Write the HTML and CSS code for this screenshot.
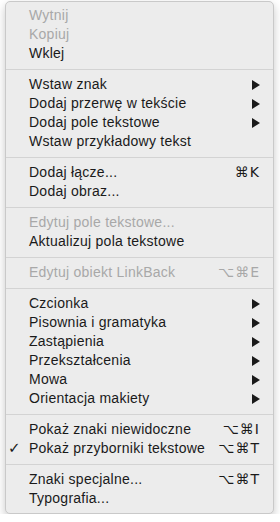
FILE: index.html
```html
<!DOCTYPE html>
<html lang="pl">
<head>
  <meta charset="UTF-8" />
  <meta name="viewport" content="width=device-width, initial-scale=1.0"/>
  <title>Menu kontekstowe</title>
  <link rel="stylesheet" href="styles.css">
</head>
<body>
  <!-- Context menu -->
  <ul class="menu">
    <li class="item disabled"><span class="check"></span><span class="label">Wytnij</span></li>
    <li class="item disabled"><span class="check"></span><span class="label">Kopiuj</span></li>
    <li class="item"><span class="check"></span><span class="label">Wklej</span></li>
    <li class="sep"></li>
    <li class="item"><span class="check"></span><span class="label">Wstaw znak</span><span class="arrow"></span></li>
    <li class="item"><span class="check"></span><span class="label">Dodaj przerwę w tekście</span><span class="arrow"></span></li>
    <li class="item"><span class="check"></span><span class="label">Dodaj pole tekstowe</span><span class="arrow"></span></li>
    <li class="item"><span class="check"></span><span class="label">Wstaw przykładowy tekst</span></li>
    <li class="sep"></li>
    <li class="item"><span class="check"></span><span class="label">Dodaj łącze...</span><span class="key">⌘K</span></li>
    <li class="item"><span class="check"></span><span class="label">Dodaj obraz...</span></li>
    <li class="sep"></li>
    <li class="item disabled"><span class="check"></span><span class="label">Edytuj pole tekstowe...</span></li>
    <li class="item"><span class="check"></span><span class="label">Aktualizuj pola tekstowe</span></li>
    <li class="sep"></li>
    <li class="item disabled"><span class="check"></span><span class="label">Edytuj obiekt LinkBack</span><span class="key">⌥⌘E</span></li>
    <li class="sep"></li>
    <li class="item"><span class="check"></span><span class="label">Czcionka</span><span class="arrow"></span></li>
    <li class="item"><span class="check"></span><span class="label">Pisownia i gramatyka</span><span class="arrow"></span></li>
    <li class="item"><span class="check"></span><span class="label">Zastąpienia</span><span class="arrow"></span></li>
    <li class="item"><span class="check"></span><span class="label">Przekształcenia</span><span class="arrow"></span></li>
    <li class="item"><span class="check"></span><span class="label">Mowa</span><span class="arrow"></span></li>
    <li class="item"><span class="check"></span><span class="label">Orientacja makiety</span><span class="arrow"></span></li>
    <li class="sep"></li>
    <li class="item"><span class="check"></span><span class="label">Pokaż znaki niewidoczne</span><span class="key">⌥⌘I</span></li>
    <li class="item"><span class="check">✓</span><span class="label">Pokaż przyborniki tekstowe</span><span class="key">⌥⌘T</span></li>
    <li class="sep"></li>
    <li class="item"><span class="check"></span><span class="label">Znaki specjalne...</span><span class="key">⌥⌘T</span></li>
    <li class="item"><span class="check"></span><span class="label">Typografia...</span></li>
  </ul>
</body>
</html>
```

FILE: styles.css
```css
/* General reset */
* {
  margin: 0;
  padding: 0;
  box-sizing: border-box;
}

body {
  background: #fff;
  padding: 1px 6px 0 5px;
  font-family: "Liberation Sans", Arial, sans-serif;
  font-size: 14px;
  color: #1a1a1a;
}

/* Menu panel */
.menu {
  list-style: none;
  width: 269px;
  background: #ececec;
  border: 1px solid #c9c9c9;
  border-radius: 5px;
  padding: 4px 0 5px;
  box-shadow: 0 4px 10px rgba(0, 0, 0, 0.22);
}

.item {
  display: flex;
  align-items: center;
  height: 19px;
  line-height: 19px;
  padding-right: 14px;
}
.item.disabled {
  color: #a8a8a8;
}

.check {
  width: 23px;
  flex: none;
  padding-left: 2px;
  font-family: "DejaVu Sans", sans-serif;
  font-size: 15px;
  font-weight: bold;
}

.label {
  flex: 1;
  white-space: nowrap;
  letter-spacing: 0.25px;
}

.key {
  font-family: "DejaVu Sans", sans-serif;
  font-size: 14px;
  letter-spacing: 1px;
  margin-right: -1px;
}

.arrow {
  width: 0;
  height: 0;
  border-top: 5px solid transparent;
  border-bottom: 5px solid transparent;
  border-left: 8px solid #1a1a1a;
  margin-right: -1px;
}

/* Separator line */
.sep {
  height: 12px;
  display: flex;
  align-items: center;
}
.sep::before {
  content: '';
  display: block;
  width: 100%;
  height: 1px;
  background: #d3d3d3;
}
```
